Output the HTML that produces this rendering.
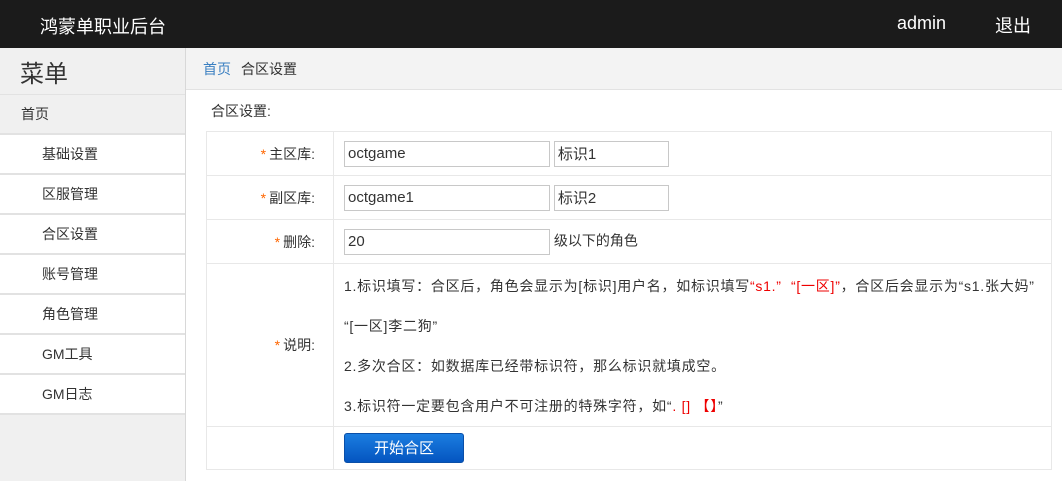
<!DOCTYPE html>
<html><head><meta charset="utf-8"><style>
*{margin:0;padding:0;box-sizing:border-box}
body{width:1062px;height:481px;overflow:hidden;background:#fff;font-family:"Liberation Sans","Noto Sans CJK SC",sans-serif;font-size:14px;color:#333;position:relative}
.hd{position:absolute;left:0;top:0;width:1062px;height:48px;background:#1b1b1b;color:#fff;font-size:18px}
.hd span{position:absolute;top:12px}
.sb{position:absolute;left:0;top:48px;width:186px;height:433px;background:#f0f0f0;border-right:1px solid #d8d8d8}
.sb .t{position:absolute;left:20px;top:6px;font-size:24px;color:#333}
.sb .it{position:absolute;left:0;width:185px;height:38px;line-height:38px;background:#fff;font-size:14px;padding-left:42px}
.sb .sep{position:absolute;left:0;width:185px;height:2px;background:#e2e2e2}
.bc{position:absolute;left:186px;top:48px;width:876px;height:42px;background:#f3f3f3;border-bottom:1px solid #e2e2e2;line-height:42px;padding-left:17px;font-size:14px}
.bc a{color:#3a7fc1;margin-right:10px}
.ttl{position:absolute;left:211px;top:101px}
table{position:absolute;left:206px;top:131px;width:846px;border-collapse:collapse}
td{border:1px solid #e8e8e8;vertical-align:middle}
td.l{width:127px;text-align:right;padding-right:18px}
td.l i{color:#f60;font-style:normal;margin-right:3px}
td.r{padding-left:10px}
input{height:26px;border:1px solid #c8c8c8;font:15px "Liberation Sans","Noto Sans CJK SC",sans-serif;color:#333;padding-left:3px;vertical-align:middle}
.red{color:#e00}
.btn{display:inline-block;width:120px;height:30px;line-height:30px;text-align:center;color:#fff;font-size:15px;border-radius:3px;background:linear-gradient(#1b7de0,#0455c0);border:1px solid #0a4fa8}
</style></head><body>
<div class="hd"><span style="left:40px;top:13px">鸿蒙单职业后台</span><span style="left:897px;top:13px">admin</span><span style="left:995px">退出</span></div>
<div class="sb">
<div class="t">菜单</div>
<div class="sep" style="top:46px"></div>
<div class="it" style="top:47px;background:#f0f0f0;padding-left:21px">首页</div>
<div class="sep" style="top:85px"></div>
<div class="it" style="top:87px">基础设置</div><div class="sep" style="top:125px"></div>
<div class="it" style="top:127px">区服管理</div><div class="sep" style="top:165px"></div>
<div class="it" style="top:167px">合区设置</div><div class="sep" style="top:205px"></div>
<div class="it" style="top:207px">账号管理</div><div class="sep" style="top:245px"></div>
<div class="it" style="top:247px">角色管理</div><div class="sep" style="top:285px"></div>
<div class="it" style="top:287px">GM工具</div><div class="sep" style="top:325px"></div>
<div class="it" style="top:327px">GM日志</div><div class="sep" style="top:365px"></div>
</div>
<div class="bc"><a>首页</a>合区设置</div>
<div class="ttl">合区设置:</div>
<table>
<tr style="height:44px"><td class="l"><i>*</i>主区库:</td><td class="r"><input style="width:206px" value="octgame"> <input style="width:115px" value="标识1"></td></tr>
<tr style="height:44px"><td class="l"><i>*</i>副区库:</td><td class="r"><input style="width:206px" value="octgame1"> <input style="width:115px" value="标识2"></td></tr>
<tr style="height:44px"><td class="l"><i>*</i>删除:</td><td class="r"><input style="width:206px" value="20"> 级以下的角色</td></tr>
<tr style="height:163px"><td class="l"><i>*</i>说明:</td><td class="r" style="line-height:40px;padding-top:2px;letter-spacing:0.75px">1.标识填写：合区后，角色会显示为[标识]用户名，如标识填写<span class="red">“s1.” &nbsp;“[一区]”</span>，合区后会显示为“s1.张大妈”<br>“[一区]李二狗”<br>2.多次合区：如数据库已经带标识符，那么标识就填成空。<br>3.标识符一定要包含用户不可注册的特殊字符，如“<span class="red">. [] 【】</span>”</td></tr>
<tr style="height:43px"><td class="l"></td><td class="r"><span class="btn">开始合区</span></td></tr>
</table>
</body></html>
